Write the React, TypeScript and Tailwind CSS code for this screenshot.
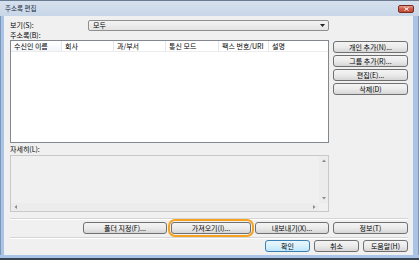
import React from 'react';

const font = "font-['Noto_Sans_CJK_KR','Noto_Sans',sans-serif]";

const Btn = ({ label, w, primary = false }: { label: string; w: string; primary?: boolean }) => (
  <button
    className={`${w} h-[12px] shrink-0 rounded-[3px] border ${
      primary ? 'border-[#3c7fb1] from-[#eaf6fd] via-[#d9f0fc] to-[#bee6fd]' : 'border-[#707070] from-[#f4f4f4] via-[#ebebeb] to-[#d6d6d6]'
    } bg-linear-to-b flex items-center justify-center text-[7px] leading-none text-black`}
  >
    {label}
  </button>
);

const columns = [
  { name: '수신인 이름', w: 'w-[51px]' },
  { name: '회사', w: 'w-[52px]' },
  { name: '과/부서', w: 'w-[52px]' },
  { name: '통신 모드', w: 'w-[53px]' },
  { name: '팩스 번호/URI', w: 'w-[50px]' },
  { name: '설명', w: 'w-[58px]' },
];

const Arrow = ({ dir }: { dir: 'up' | 'down' | 'left' | 'right' }) => {
  const pts = {
    up: '1,4 3,1.5 5,4',
    down: '1,2 3,4.5 5,2',
    left: '4,1 1.5,3 4,5',
    right: '2,1 4.5,3 2,5',
  }[dir];
  return (
    <svg width="6" height="6" viewBox="0 0 6 6">
      <polygon points={pts} fill="#8a8a8a" />
    </svg>
  );
};

const Separator = () => (
  <div className="h-[2px] w-full border-t border-[#d5d5d5] border-b-white border-b" />
);

export default function App() {
  return (
    <div className={`w-[419px] h-[260px] bg-[#b7cde8] flex flex-col ${font}`}>
      {/* title bar */}
      <div className="h-[16px] shrink-0 border-t border-[#6b7b90] bg-linear-to-b from-[#d6e1ee] to-[#c7d6e8] flex items-center justify-between pl-[5px] pr-[5px]">
        <span className="text-[6.5px] leading-none text-[#1c2a3a]">주소록 편집</span>
        <div className="w-[16px] h-[8px] rounded-[2px] border border-[#7a2c22] bg-linear-to-b from-[#e39a8c] via-[#cf5a45] to-[#c24a35] flex items-center justify-center">
          <svg width="5" height="4" viewBox="0 0 5 4">
            <path d="M0.5 0.5 L4.5 3.5 M4.5 0.5 L0.5 3.5" stroke="white" strokeWidth="1" />
          </svg>
        </div>
      </div>

      <div className="flex flex-1 min-h-0">
        <div className="w-[4px] shrink-0 bg-[#a9c4e6] border-l border-[#7e97b8]" />
        {/* body */}
        <div className="w-[409px] shrink-0 bg-[#f0f0f0] flex flex-col pl-[6px] pr-[5px] pt-[4px] text-[7px] text-black">
          <div className="flex items-center h-[11px]">
            <span className="w-[78px] leading-none">보기(S):</span>
            <div className="w-[241px] h-[11px] rounded-[2px] border border-[#8f8f8f] bg-linear-to-b from-[#f4f4f4] to-[#e3e3e3] flex items-center justify-between pl-[4px] pr-[3px]">
              <span className="leading-none">모두</span>
              <svg width="5" height="3" viewBox="0 0 5 3">
                <polygon points="0,0 5,0 2.5,3" fill="#222" />
              </svg>
            </div>
          </div>
          <div className="h-[9px] flex items-center leading-none">주소록(B):</div>

          <div className="flex">
            <div className="w-[319px] h-[103px] border border-[#828790] bg-white flex flex-col">
              <div className="h-[11px] flex border-b border-[#ececec]">
                {columns.map((c, i) => (
                  <div
                    key={c.name}
                    className={`${c.w} shrink-0 h-full flex items-center pl-[3px] leading-none ${
                      i < columns.length - 1 ? 'border-r border-[#e3e6ea]' : ''
                    } ${i === 0 ? 'bg-linear-to-b from-[#ffffff] to-[#f2f6fa]' : ''}`}
                  >
                    {c.name}
                  </div>
                ))}
              </div>
            </div>
            <div className="ml-[4px] w-[75px] flex flex-col gap-[2px] pt-[1px]">
              <Btn label="개인 추가(N)..." w="w-[75px]" />
              <Btn label="그룹 추가(R)..." w="w-[75px]" />
              <Btn label="편집(E)..." w="w-[75px]" />
              <Btn label="삭제(D)" w="w-[75px]" />
            </div>
          </div>

          <div className="h-[12px] flex items-center leading-none">자세히(L):</div>
          <div className="w-[319px] h-[57px] border border-[#c9c9c9] bg-[#f0f0f0] flex flex-col">
            <div className="flex flex-1">
              <div className="flex-1" />
              <div className="w-[9px] bg-[#ececec] flex flex-col items-center justify-between py-[2px]">
                <Arrow dir="up" />
                <Arrow dir="down" />
              </div>
            </div>
            <div className="h-[8px] flex">
              <div className="flex-1 bg-[#ececec] flex items-center justify-between px-[2px]">
                <Arrow dir="left" />
                <Arrow dir="right" />
              </div>
              <div className="w-[9px] bg-[#f0f0f0]" />
            </div>
          </div>

          <div className="mt-[6px]">
            <Separator />
          </div>
          <div className="mt-[2px] flex justify-end gap-[4px]">
            <Btn label="폴더 지정(F)..." w="w-[84px]" />
            <div className="rounded-[4px] ring-2 ring-[#f6a21f] ring-offset-[1px] ring-offset-[#f0f0f0]">
              <Btn label="가져오기(I)..." w="w-[80px]" />
            </div>
            <Btn label="내보내기(X)..." w="w-[74px]" />
            <Btn label="정보(T)" w="w-[75px]" />
          </div>
          <div className="mt-[3px]">
            <Separator />
          </div>
          <div className="mt-[1px] flex justify-end gap-[4px]">
            <Btn label="확인" w="w-[45px]" primary />
            <Btn label="취소" w="w-[45px]" />
            <Btn label="도움말(H)" w="w-[45px]" />
          </div>
        </div>
        <div className="flex-1 bg-[#a9c4e6] border-r border-[#7e97b8]" />
      </div>
      <div className="h-[3px] shrink-0 bg-[#a9c4e6]" />
      <div className="h-[2px] shrink-0 bg-[#3a4350]" />
    </div>
  );
}
